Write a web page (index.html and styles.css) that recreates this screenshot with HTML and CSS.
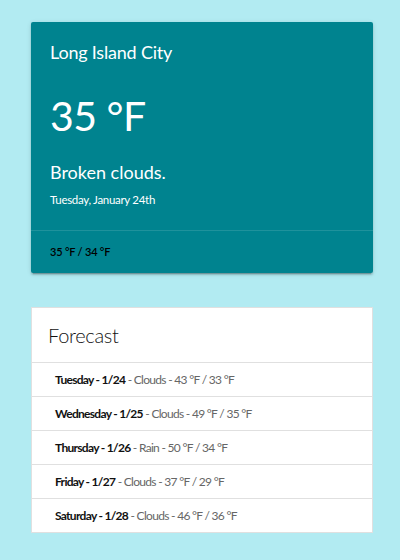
FILE: index.html
```html
<!DOCTYPE html>
<html>
<head>
<meta charset="utf-8">
<link rel="stylesheet" href="styles.css">
</head>
<body>
<div class="page">
  <div class="card">
    <div class="card-content">
      <div class="city">Long Island City</div>
      <div class="temp">35 °F</div>
      <div class="desc">Broken clouds.</div>
      <div class="date">Tuesday, January 24th</div>
    </div>
    <div class="card-action">35 °F / 34 °F</div>
  </div>
  <ul class="forecast">
    <li class="forecast-header">Forecast</li>
    <li class="forecast-item"><b>Tuesday - 1/24</b> - Clouds - 43 °F / 33 °F</li>
    <li class="forecast-item"><b>Wednesday - 1/25</b> - Clouds - 49 °F / 35 °F</li>
    <li class="forecast-item"><b>Thursday - 1/26</b> - Rain - 50 °F / 34 °F</li>
    <li class="forecast-item"><b>Friday - 1/27</b> - Clouds - 37 °F / 29 °F</li>
    <li class="forecast-item"><b>Saturday - 1/28</b> - Clouds - 46 °F / 36 °F</li>
  </ul>
</div>
</body>
</html>
```

FILE: styles.css
```css
html, body {
  margin: 0;
  padding: 0;
  background: #b2ebf2;
  font-family: Lato, "Open Sans", sans-serif;
}
.page {
  width: 342px;
  margin-left: 31px;
  padding-top: 22px;
  display: flex;
  flex-direction: column;
  gap: 34px;
}
.card {
  background: #00838f;
  color: #fff;
  border-radius: 2px;
  box-shadow: 0 2px 2px rgba(0,0,0,0.14), 0 1px 5px rgba(0,0,0,0.12), 0 3px 1px -2px rgba(0,0,0,0.2);
}
.card-content {
  padding: 17px 19px 21px;
  border-bottom: 1px solid rgba(255,255,255,0.12);
}
.city {
  font-size: 18px;
  line-height: 26px;
  letter-spacing: -0.2px;
}
.temp {
  font-size: 41px;
  line-height: 50px;
  margin-top: 26px;
  letter-spacing: -0.5px;
}
.desc {
  font-size: 18px;
  line-height: 26px;
  margin-top: 18px;
}
.date {
  font-size: 11.5px;
  line-height: 18px;
  margin-top: 6px;
  letter-spacing: -0.3px;
}
.card-action {
  color: #000;
  font-size: 11px;
  font-weight: 600;
  padding: 13px 19px 14px;
  line-height: 15px;
  letter-spacing: -0.2px;
}
.forecast {
  list-style: none;
  margin: 0;
  padding: 0;
  background: #fff;
  border: 1px solid #e0e0e0;
}
.forecast-header {
  font-size: 20px;
  font-weight: 300;
  color: #111;
  height: 54px;
  line-height: 55px;
  padding: 0 16px;
  letter-spacing: -0.3px;
  border-bottom: 1px solid #e0e0e0;
}
.forecast-item {
  height: 33px;
  line-height: 34px;
  padding: 0 23px;
  font-size: 12px;
  letter-spacing: -0.7px;
  color: #666;
  border-bottom: 1px solid #e0e0e0;
}
.forecast-item:last-child {
  border-bottom: none;
}
.forecast-item b {
  color: #111;
  font-weight: 700;
}
```
